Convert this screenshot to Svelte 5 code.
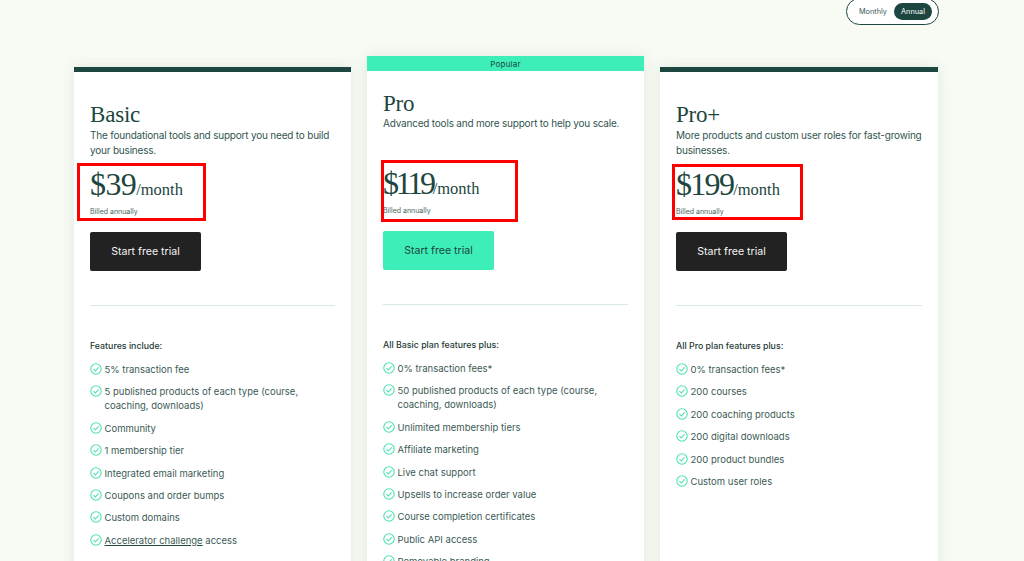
<script>
  const plans = [
    {
      name: 'Basic',
      desc: 'The foundational tools and support you need to build your business.',
      price: '$39',
      track: -0.6,
      heading: 'Features include:',
      box: 'box-basic',
      features: [
        ['5% transaction fee'],
        ['5 published products of each type (course, coaching, downloads)'],
        ['Community'],
        ['1 membership tier'],
        ['Integrated email marketing'],
        ['Coupons and order bumps'],
        ['Custom domains'],
        ['access', 'Accelerator challenge']
      ]
    },
    {
      name: 'Pro',
      popular: true,
      desc: 'Advanced tools and more support to help you scale.',
      price: '$119',
      track: -3.3,
      heading: 'All Basic plan features plus:',
      box: 'box-pro',
      features: [
        ['0% transaction fees*'],
        ['50 published products of each type (course, coaching, downloads)'],
        ['Unlimited membership tiers'],
        ['Affiliate marketing'],
        ['Live chat support'],
        ['Upsells to increase order value'],
        ['Course completion certificates'],
        ['Public API access'],
        ['Removable branding']
      ]
    },
    {
      name: 'Pro+',
      desc: 'More products and custom user roles for fast-growing businesses.',
      price: '$199',
      track: -1.7,
      heading: 'All Pro plan features plus:',
      box: 'box-plus',
      features: [
        ['0% transaction fees*'],
        ['200 courses'],
        ['200 coaching products'],
        ['200 digital downloads'],
        ['200 product bundles'],
        ['Custom user roles']
      ]
    }
  ];
</script>

<div class="page">
  <div class="toggle-row">
    <div class="toggle">
      <span class="opt">Monthly</span>
      <span class="opt active">Annual</span>
    </div>
  </div>

  <div class="plans">
    {#each plans as plan}
      <section class="card" class:popular={plan.popular}>
        {#if plan.popular}
          <div class="banner">Popular</div>
        {/if}
        <div class="body">
          <div class="head">
            <h2>{plan.name}</h2>
            <p class="desc">{plan.desc}</p>
          </div>
          <div class="price-wrap">
            <div class="price"><span class="amount" style="letter-spacing: {plan.track}px">{plan.price}</span><span class="per">/month</span></div>
            <div class="billed">Billed annually</div>
            <div class="mark {plan.box}"></div>
          </div>
          <button class="cta">Start free trial</button>
          <hr />
          <h3>{plan.heading}</h3>
          <ul>
            {#each plan.features as f}
              <li>
                <svg viewBox="0 0 12 12" width="12" height="12" aria-hidden="true">
                  <circle cx="6" cy="6" r="5.2" />
                  <path d="M3.5 6.2l1.8 1.8 3.3-3.6" />
                </svg>
                <span>
                  {#if f[1]}<u>{f[1]}</u>{' '}{/if}{f[0]}
                </span>
              </li>
            {/each}
          </ul>
        </div>
      </section>
    {/each}
  </div>
</div>

<style>
  :global(body) {
    margin: 0;
    background: #f7fbf4;
    overflow: hidden;
  }
  .page {
    height: 561px;
    overflow: hidden;
    font-family: Inter, "Liberation Sans", sans-serif;
    color: #1d4640;
  }
  .toggle-row {
    display: flex;
    justify-content: flex-end;
    padding-right: 85px;
    height: 56px;
  }
  .toggle {
    box-sizing: border-box;
    width: 93px;
    height: 27px;
    margin-top: -2px;
    padding: 0 6px 0 12px;
    display: flex;
    align-items: center;
    justify-content: space-between;
    background: #fff;
    border: 1px solid #1d4640;
    border-radius: 14px;
    font-size: 7.3px;
  }
  .opt {
    line-height: 17px;
    color: #3a5854;
  }
  .opt.active {
    width: 38px;
    border-radius: 9px;
    background: #1d4640;
    color: #fff;
    text-align: center;
  }
  .plans {
    display: grid;
    grid-template-columns: 277px 277px 278px;
    column-gap: 16px;
    align-items: start;
    margin-left: 74px;
  }
  .card {
    background: #fff;
    border-top: 5px solid #1d4640;
    margin-top: 11px;
    box-shadow: 0 0 14px rgba(29, 70, 64, 0.1);
    height: 520px;
  }
  .card.popular {
    border-top: none;
    margin-top: 0;
  }
  .banner {
    height: 15px;
    line-height: 17px;
    background: #3eeeb9;
    text-align: center;
    font-size: 8px;
    letter-spacing: 0.2px;
  }
  .body {
    padding: 0 16px;
  }
  .head {
    box-sizing: border-box;
    height: 84px;
    padding-top: 30px;
  }
  .popular .head {
    padding-top: 20px;
  }
  h2 {
    margin: 0;
    font-family: "Liberation Serif", serif;
    font-weight: 400;
    font-size: 23px;
    line-height: 26px;
    letter-spacing: -0.2px;
  }
  .popular h2 {
    margin-bottom: -1px;
  }
  .desc {
    margin: 0;
    font-size: 10px;
    line-height: 14.5px;
    letter-spacing: -0.2px;
    color: #31554f;
  }
  .price-wrap {
    position: relative;
    height: 76px;
  }
  .price {
    height: 51px;
    padding-top: 8px;
    box-sizing: border-box;
    font-family: "Liberation Serif", serif;
    line-height: 40px;
    color: #1d4640;
  }
  .amount {
    font-size: 32px;
  }
  .per {
    font-size: 16.5px;
    letter-spacing: 0;
  }
  .billed {
    font-size: 7px;
    line-height: 10px;
    color: #4a6460;
  }
  .mark {
    position: absolute;
    box-sizing: border-box;
    border: 3px solid #f00;
  }
  .box-basic {
    left: -13px;
    top: 7px;
    width: 129px;
    height: 58px;
  }
  .box-pro {
    left: -2px;
    top: 5px;
    width: 137px;
    height: 62px;
  }
  .box-plus {
    left: -4px;
    top: 8px;
    width: 131px;
    height: 56px;
  }
  .cta {
    display: block;
    width: 111px;
    height: 39px;
    padding: 0;
    border: none;
    border-radius: 2px;
    background: #222;
    color: #f4f4f4;
    font-family: inherit;
    font-size: 10.6px;
  }
  .popular .cta {
    background: #3eeeb9;
    color: #1d4640;
  }
  hr {
    margin: 34px 0 0;
    border: none;
    border-top: 1px solid #d8e8e2;
  }
  h3 {
    margin: 34px 0 0;
    font-size: 8.8px;
    font-weight: 500;
    line-height: 12px;
    color: #1d3a36;
  }
  ul {
    list-style: none;
    margin: 11px 0 0;
    padding: 0;
    display: flex;
    flex-direction: column;
    row-gap: 8.4px;
  }
  li {
    display: flex;
    column-gap: 3px;
    font-size: 9.5px;
    line-height: 14px;
    color: #3b5a55;
  }
  li svg {
    flex: none;
    margin-left: -0.5px;
    fill: none;
    stroke: #4fe0b4;
    stroke-width: 1.1;
  }
  u {
    text-underline-offset: 1px;
    text-decoration-color: #1d4640;
  }
</style>
